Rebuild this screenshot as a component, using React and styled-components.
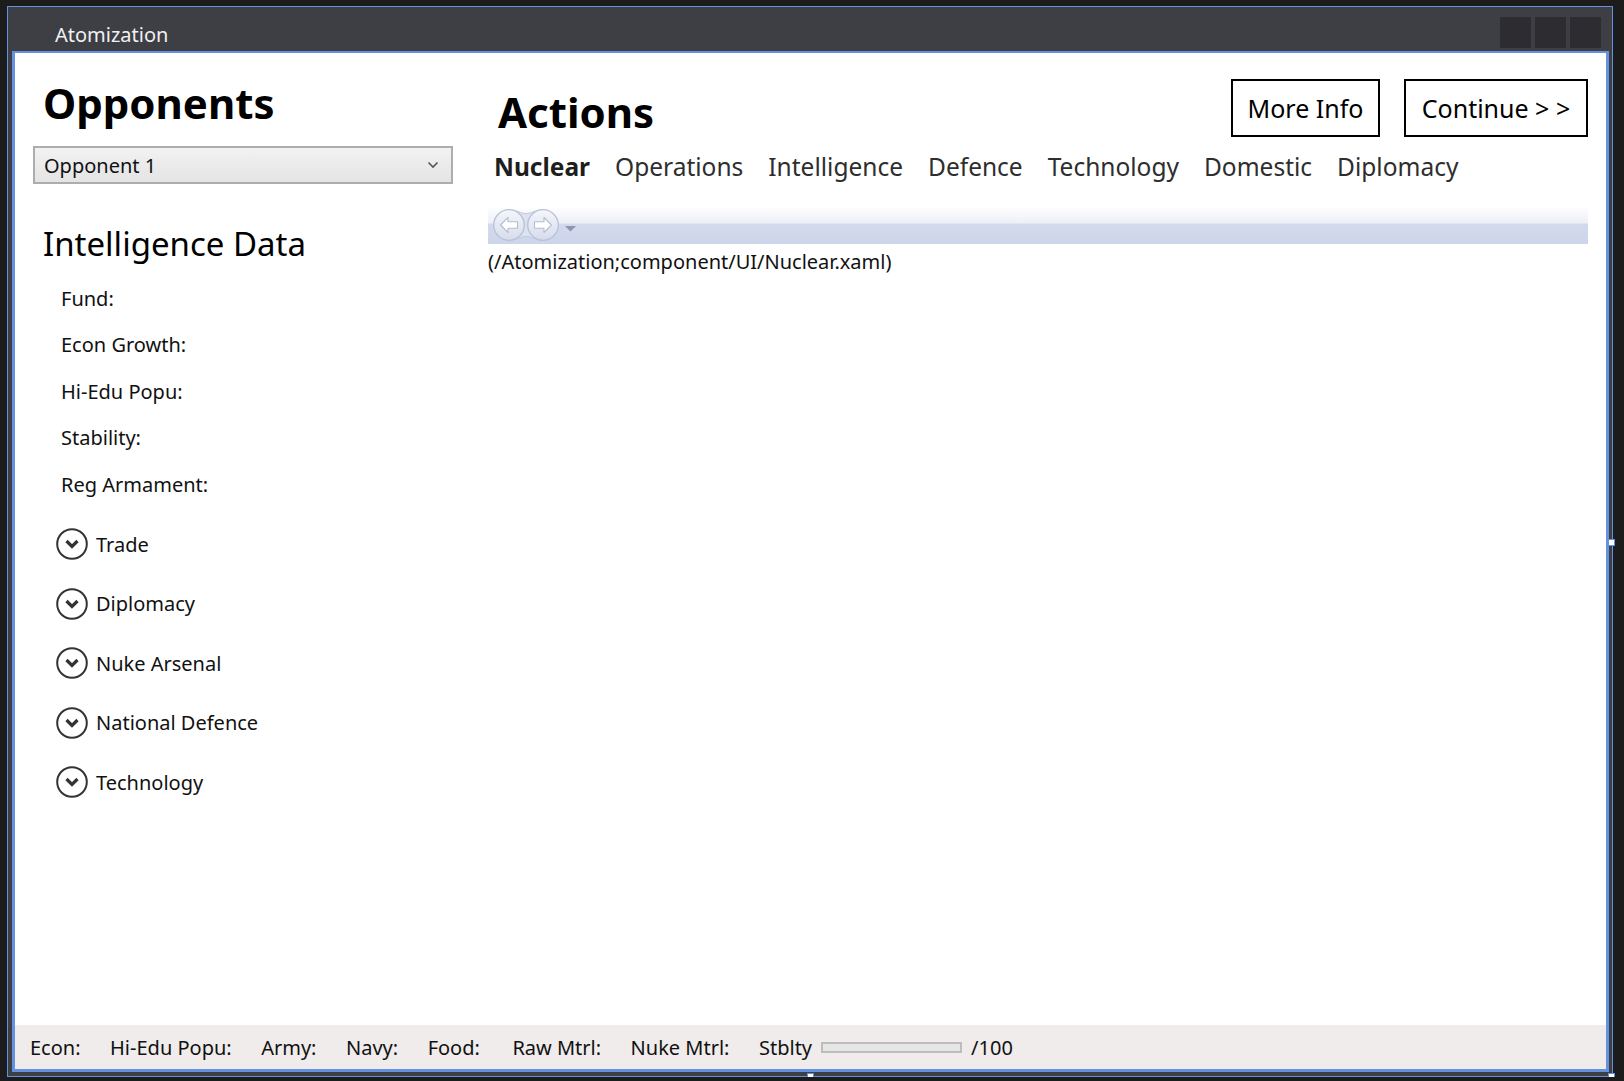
import styled, { createGlobalStyle } from "styled-components";

const BLUE = "#6592e0";

const GlobalStyle = createGlobalStyle`
  body {
    margin: 0;
    background: #1c1c1c;
    overflow: hidden;
    font-family: "Noto Sans", "Open Sans", sans-serif;
  }
`;

const Window = styled.div`
  position: relative;
  box-sizing: border-box;
  margin: 6px 0 0 7px;
  width: 1606px;
  height: 1071px;
  border: 1px solid ${BLUE};
  background: #3e3f45;
  padding: 0 3px 4px 4px;
  display: flex;
  flex-direction: column;
`;

const TitleBar = styled.div`
  height: 44px;
  flex-shrink: 0;
  display: flex;
  align-items: flex-start;
  padding-top: 10px;
  box-sizing: border-box;
`;

const Title = styled.span`
  margin: 4px 0 0 43px;
  color: #f1f1f1;
  font-size: 20px;
  line-height: 27px;
`;

const Controls = styled.div`
  margin: 0 8px 0 auto;
  display: flex;
  gap: 4px;
`;

const ControlBox = styled.div`
  width: 31px;
  height: 31px;
  background: #2d2d31;
`;

const Content = styled.div`
  flex: 1;
  display: flex;
  flex-direction: column;
  border: 3px solid ${BLUE};
  border-top-width: 2px;
  background: #fff;
  min-height: 0;
`;

const Main = styled.div`
  flex: 1;
  display: grid;
  grid-template-columns: 472px 1fr;
`;

const LeftColumn = styled.div`
  padding-left: 18px;
  display: flex;
  flex-direction: column;
  align-items: flex-start;
`;

const Heading = styled.h1`
  margin: ${(p) => p.$top}px 0 0 ${(p) => p.$left}px;
  font-size: ${(p) => p.$size}px;
  line-height: 50px;
  font-weight: 700;
  color: #000;
`;

const Combo = styled.div`
  margin-top: 18px;
  box-sizing: border-box;
  width: 420px;
  height: 38px;
  border: 2px solid #adadad;
  background: linear-gradient(#f2f2f2, #e4e4e4);
  display: flex;
  align-items: center;
  justify-content: space-between;
  padding: 0 12px 0 9px;
  font-size: 20px;
  color: #111;
`;

const SubHeading = styled.h2`
  margin: 40px 0 0 10px;
  font-size: 33px;
  line-height: 40px;
  font-weight: 400;
  color: #000;
`;

const FieldList = styled.div`
  margin: 21.5px 0 0 28px;
  display: flex;
  flex-direction: column;
  gap: 20.5px;
`;

const Field = styled.div`
  font-size: 20px;
  line-height: 26px;
  color: #111;
`;

const ExpanderList = styled.div`
  margin: 30.5px 0 0 23px;
  display: flex;
  flex-direction: column;
  gap: 27.5px;
`;

const Expander = styled.div`
  display: flex;
  align-items: center;
  gap: 8px;
  height: 32px;
  font-size: 20px;
  color: #111;
`;

const RightColumn = styled.div`
  padding: 0 18px 0 1px;
  display: flex;
  flex-direction: column;
`;

const HeaderRow = styled.div`
  margin-top: 26px;
  display: flex;
  align-items: flex-start;
`;

const ButtonGroup = styled.div`
  margin-left: auto;
  display: flex;
  gap: 24px;
`;

const Button = styled.button`
  box-sizing: border-box;
  width: ${(p) => p.$width}px;
  height: 58px;
  border: 2px solid #000;
  background: #fff;
  font-family: inherit;
  font-size: 25px;
  color: #000;
  padding: 0;
`;

const Tabs = styled.div`
  margin: 14px 0 0 6px;
  display: flex;
  gap: 25px;
`;

const Tab = styled.span`
  font-size: 24.5px;
  line-height: 32px;
  font-weight: ${(p) => (p.$active ? 700 : 400)};
  color: ${(p) => (p.$active ? "#1e1e1e" : "#2e2e2e")};
`;

const NavBar = styled.div`
  margin-top: 23px;
  height: 38px;
  background: linear-gradient(
    #ffffff 0%,
    #eef0f7 45%,
    #d3daee 47%,
    #cdd5eb 100%
  );
  display: flex;
  align-items: center;
  padding-left: 3px;
`;

const PathText = styled.div`
  margin-top: 5px;
  font-size: 20px;
  line-height: 26px;
  color: #111;
`;

const StatusBar = styled.div`
  height: 44px;
  flex-shrink: 0;
  background: #efeceb;
  display: flex;
  align-items: center;
  padding-left: 15px;
  gap: 29.5px;
  font-size: 20px;
  color: #111;
`;

const StatusItem = styled.span`
  margin-right: ${(p) => p.$extra || 0}px;
`;

const StabilityGroup = styled.div`
  display: flex;
  align-items: center;
  gap: 9px;
`;

const ProgressBar = styled.div`
  box-sizing: border-box;
  width: 141px;
  height: 11px;
  border: 2px solid #bdbdbd;
  background: #e6e6e6;
`;

const Handle = styled.div`
  position: absolute;
  width: 5px;
  height: 5px;
  background: #fff;
  border: 1px solid ${BLUE};
  left: ${(p) => p.$x}px;
  top: ${(p) => p.$y}px;
`;

function ComboChevron() {
  return (
    <svg width="12" height="8" viewBox="0 0 12 8">
      <path d="M1.5 1.5 L6 6 L10.5 1.5" fill="none" stroke="#555" strokeWidth="1.6" />
    </svg>
  );
}

function ExpandIcon() {
  return (
    <svg width="32" height="32" viewBox="0 0 32 32">
      <circle cx="16" cy="16" r="14.8" fill="#fff" stroke="#333" strokeWidth="2" />
      <path d="M10.5 13 L16 18.5 L21.5 13" fill="none" stroke="#333" strokeWidth="3.2" />
    </svg>
  );
}

function NavButtons() {
  return (
    <svg width="104" height="36" viewBox="0 0 104 36">
      <defs>
        <linearGradient id="navFill" x1="0" y1="0" x2="0" y2="1">
          <stop offset="0" stopColor="#f4f6fb" />
          <stop offset="1" stopColor="#d6dcec" />
        </linearGradient>
      </defs>
      <path
        d="M18 3 C27 3 29 6.5 35 6.5 C41 6.5 43 3 52 3 L52 33 C43 33 41 29.5 35 29.5 C29 29.5 27 33 18 33 Z"
        fill="#dde2f0"
        stroke="#c3cadd"
      />
      <circle cx="18" cy="18" r="15.3" fill="url(#navFill)" stroke="#b9c1d6" strokeWidth="1.3" />
      <circle cx="52" cy="18" r="15.3" fill="url(#navFill)" stroke="#b9c1d6" strokeWidth="1.3" />
      <path
        d="M9.5 18 L17 10.5 L17 14.8 L26.5 14.8 L26.5 21.2 L17 21.2 L17 25.5 Z"
        fill="#fff"
        stroke="#b5bdd2"
        strokeWidth="1.1"
        strokeLinejoin="round"
      />
      <path
        d="M60.5 18 L53 10.5 L53 14.8 L43.5 14.8 L43.5 21.2 L53 21.2 L53 25.5 Z"
        fill="#fff"
        stroke="#b5bdd2"
        strokeWidth="1.1"
        strokeLinejoin="round"
      />
      <path d="M74 19 L85 19 L79.5 24.5 Z" fill="#8d96ad" />
    </svg>
  );
}

const fields = ["Fund:", "Econ Growth:", "Hi-Edu Popu:", "Stability:", "Reg Armament:"];
const sections = ["Trade", "Diplomacy", "Nuke Arsenal", "National Defence", "Technology"];
const tabs = ["Nuclear", "Operations", "Intelligence", "Defence", "Technology", "Domestic", "Diplomacy"];
const stats = [
  { label: "Econ:" },
  { label: "Hi-Edu Popu:" },
  { label: "Army:" },
  { label: "Navy:" },
  { label: "Food:", extra: 3 },
  { label: "Raw Mtrl:" },
  { label: "Nuke Mtrl:" },
];

export default function App() {
  return (
    <>
      <GlobalStyle />
      <Window>
        <TitleBar>
          <Title>Atomization</Title>
          <Controls>
            <ControlBox />
            <ControlBox />
            <ControlBox />
          </Controls>
        </TitleBar>
        <Content>
          <Main>
            <LeftColumn>
              <Heading $size={42} $top={25} $left={10}>
                Opponents
              </Heading>
              <Combo>
                <span>Opponent 1</span>
                <ComboChevron />
              </Combo>
              <SubHeading>Intelligence Data</SubHeading>
              <FieldList>
                {fields.map((f) => (
                  <Field key={f}>{f}</Field>
                ))}
              </FieldList>
              <ExpanderList>
                {sections.map((s) => (
                  <Expander key={s}>
                    <ExpandIcon />
                    <span>{s}</span>
                  </Expander>
                ))}
              </ExpanderList>
            </LeftColumn>
            <RightColumn>
              <HeaderRow>
                <Heading $size={42} $top={8} $left={10}>
                  Actions
                </Heading>
                <ButtonGroup>
                  <Button $width={149}>More Info</Button>
                  <Button $width={184}>Continue &gt; &gt;</Button>
                </ButtonGroup>
              </HeaderRow>
              <Tabs>
                {tabs.map((t, i) => (
                  <Tab key={t} $active={i === 0}>
                    {t}
                  </Tab>
                ))}
              </Tabs>
              <NavBar>
                <NavButtons />
              </NavBar>
              <PathText>(/Atomization;component/UI/Nuclear.xaml)</PathText>
            </RightColumn>
          </Main>
          <StatusBar>
            {stats.map((s) => (
              <StatusItem key={s.label} $extra={s.extra}>
                {s.label}
              </StatusItem>
            ))}
            <StabilityGroup>
              <span>Stblty</span>
              <ProgressBar />
              <span>/100</span>
            </StabilityGroup>
          </StatusBar>
        </Content>
        <Handle $x={1600} $y={532} />
        <Handle $x={799} $y={1066} />
        <Handle $x={1600} $y={1066} />
      </Window>
    </>
  );
}
